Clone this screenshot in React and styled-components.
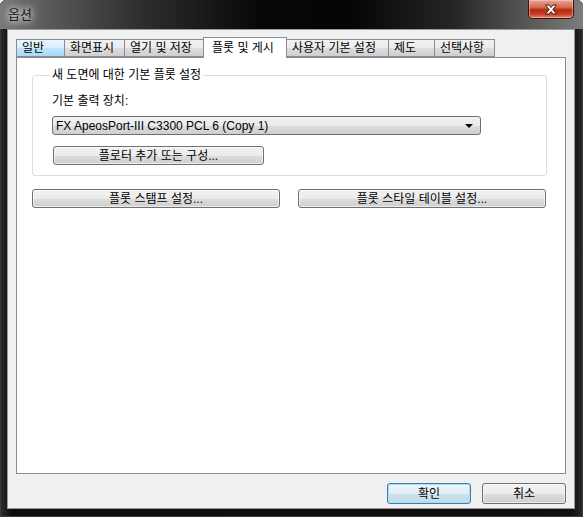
import React from "react";
import styled, { createGlobalStyle } from "styled-components";

const GlobalStyle = createGlobalStyle`
  html, body {
    margin: 0;
    padding: 0;
    background: #ffffff;
  }
  body {
    font-family: "Liberation Sans", "Noto Sans CJK KR", sans-serif;
    font-size: 12px;
    color: #000;
  }
`;

const Window = styled.div`
  width: 583px;
  height: 517px;
  box-sizing: border-box;
  display: flex;
  flex-direction: column;
  background: linear-gradient(90deg, #2e2e2e 0%, #0d0d0d 2%, #101010 98%, #2a2a2a 100%);
  border-radius: 6px 6px 0 0;
  box-shadow: inset 0 0 0 1px #3a3a3a;
  overflow: hidden;
`;

const TitleBar = styled.div`
  height: 29px;
  flex: none;
  display: flex;
  align-items: flex-start;
  padding-left: 8px;
  padding-right: 9px;
  background: linear-gradient(
    90deg,
    #7a7a7a 0%,
    #5a5a5a 8%,
    #2c2c2c 25%,
    #070707 45%,
    #050505 60%,
    #262626 78%,
    #5e5e5e 92%,
    #7c7c7c 100%
  );
`;

const Title = styled.div`
  margin-top: 7px;
  font-size: 13px;
  line-height: 16px;
  color: #1c1c1c;
  text-shadow: 0 0 6px #ffffff, 0 0 10px #e8e8e8;
`;

const CloseButton = styled.div`
  margin-left: auto;
  width: 46px;
  height: 19px;
  box-sizing: border-box;
  border: 1px solid #44100a;
  border-top: none;
  border-radius: 0 0 5px 5px;
  background: linear-gradient(
    #e6a896 0%,
    #d46a51 40%,
    #b8270f 55%,
    #c6432a 80%,
    #e08a70 100%
  );
  box-shadow: inset 0 0 0 1px rgba(255, 220, 210, 0.45);
  display: flex;
  align-items: center;
  justify-content: center;
`;

const Client = styled.div`
  flex: 1;
  margin: 0 8px 8px 7px;
  border: 1px solid #9a9a9a;
  background: #f0f0f0;
  padding: 7px 8px 4px 8px;
  display: flex;
  flex-direction: column;
`;

const TabStrip = styled.div`
  height: 20px;
  display: flex;
  align-items: flex-end;
  position: relative;
  z-index: 1;
`;

const Tab = styled.div`
  width: ${(p) => p.$w}px;
  height: ${(p) => (p.$active ? 21 : 18)}px;
  box-sizing: border-box;
  border: 1px solid #898c95;
  border-bottom: ${(p) => (p.$active ? "none" : "1px solid #898c95")};
  margin-left: -1px;
  margin-bottom: ${(p) => (p.$active ? -1 : 0)}px;
  background: ${(p) =>
    p.$active
      ? "#ffffff"
      : p.$hover
      ? "linear-gradient(#eaf6fd 0%, #d9f0fc 50%, #bee6fd 52%, #a7d9f5 100%)"
      : "linear-gradient(#f2f2f2 0%, #ebebeb 50%, #dddddd 52%, #cfcfcf 100%)"};
  display: flex;
  align-items: center;
  padding-left: ${(p) => p.$pad}px;
  line-height: 14px;
  white-space: nowrap;
  &:first-child {
    margin-left: 0;
  }
`;

const Panel = styled.div`
  height: 417px;
  box-sizing: border-box;
  background: #ffffff;
  border: 1px solid #898c95;
  padding: 10px 18px 0 15px;
  display: flex;
  flex-direction: column;
`;

const Group = styled.fieldset`
  margin: 0;
  padding: 0 10px 10px 19px;
  border: 1px solid #d9dfe3;
  border-radius: 3px;
  min-width: 0;
`;

const Legend = styled.legend`
  margin-left: -2px;
  padding: 0 2px;
  line-height: 14px;
`;

const Label = styled.div`
  margin-top: 12px;
  line-height: 14px;
`;

const Combo = styled.div`
  margin-top: 8px;
  width: 429px;
  height: 19px;
  box-sizing: border-box;
  border: 1px solid #707070;
  border-radius: 3px;
  background: linear-gradient(#f2f2f2 0%, #ebebeb 50%, #dddddd 51%, #cfcfcf 100%);
  display: flex;
  align-items: center;
  padding: 0 7px 0 3px;
  white-space: nowrap;
`;

const Arrow = styled.span`
  margin-left: auto;
  width: 0;
  height: 0;
  border-left: 4px solid transparent;
  border-right: 4px solid transparent;
  border-top: 4px solid #000;
`;

const Button = styled.div`
  width: ${(p) => (p.$w ? `${p.$w}px` : "auto")};
  height: ${(p) => p.$h || 19}px;
  box-sizing: border-box;
  border: 1px solid ${(p) => (p.$default ? "#3c7fb1" : "#707070")};
  border-radius: 3px;
  background: ${(p) =>
    p.$default
      ? "linear-gradient(#eef5fa 0%, #e1edf5 50%, #cfe2ee 51%, #c4dbea 100%)"
      : "linear-gradient(#f2f2f2 0%, #ebebeb 50%, #dddddd 51%, #cfcfcf 100%)"};
  box-shadow: ${(p) =>
    p.$default ? "inset 0 0 0 1px #a6def8" : "inset 0 0 0 1px rgba(255,255,255,0.6)"};
  display: flex;
  align-items: center;
  justify-content: center;
  line-height: 14px;
  white-space: nowrap;
`;

const PlotterButton = styled(Button)`
  margin-top: 11px;
  margin-left: 1px;
`;

const ButtonRow = styled.div`
  margin-top: 13px;
  display: grid;
  grid-template-columns: 1fr 1fr;
  column-gap: 18px;
  width: 514px;
`;

const Footer = styled.div`
  margin-top: 9px;
  display: flex;
  justify-content: flex-end;
  gap: 11px;
`;

const tabs = [
  { label: "일반", w: 49, pad: 5, hover: true },
  { label: "화면표시", w: 61, pad: 5 },
  { label: "열기 및 저장", w: 80, pad: 5 },
  { label: "플롯 및 게시", w: 84, pad: 8, active: true },
  { label: "사용자 기본 설정", w: 103, pad: 5 },
  { label: "제도", w: 47, pad: 5 },
  { label: "선택사항", w: 61, pad: 5 },
];

export default function App() {
  return (
    <>
      <GlobalStyle />
      <Window>
        <TitleBar>
          <Title>옵션</Title>
          <CloseButton>
            <svg width="14" height="11" viewBox="0 0 14 11">
              <path
                d="M1.5 1 L5 1 L7 3.5 L9 1 L12.5 1 L8.8 5.5 L12.5 10 L9 10 L7 7.5 L5 10 L1.5 10 L5.2 5.5 Z"
                fill="#ffffff"
                stroke="#3a0a04"
                strokeWidth="0.9"
                strokeLinejoin="round"
              />
            </svg>
          </CloseButton>
        </TitleBar>
        <Client>
          <TabStrip>
            {tabs.map((t) => (
              <Tab
                key={t.label}
                $w={t.w}
                $pad={t.pad}
                $active={t.active}
                $hover={t.hover}
              >
                {t.label}
              </Tab>
            ))}
          </TabStrip>
          <Panel>
            <Group>
              <Legend>새 도면에 대한 기본 플롯 설정</Legend>
              <Label>기본 출력 장치:</Label>
              <Combo>
                FX ApeosPort-III C3300 PCL 6 (Copy 1)
                <Arrow />
              </Combo>
              <PlotterButton $w={211}>플로터 추가 또는 구성...</PlotterButton>
            </Group>
            <ButtonRow>
              <Button>플롯 스탬프 설정...</Button>
              <Button>플롯 스타일 테이블 설정...</Button>
            </ButtonRow>
          </Panel>
          <Footer>
            <Button $w={84} $h={21} $default>
              확인
            </Button>
            <Button $w={84} $h={21}>
              취소
            </Button>
          </Footer>
        </Client>
      </Window>
    </>
  );
}
